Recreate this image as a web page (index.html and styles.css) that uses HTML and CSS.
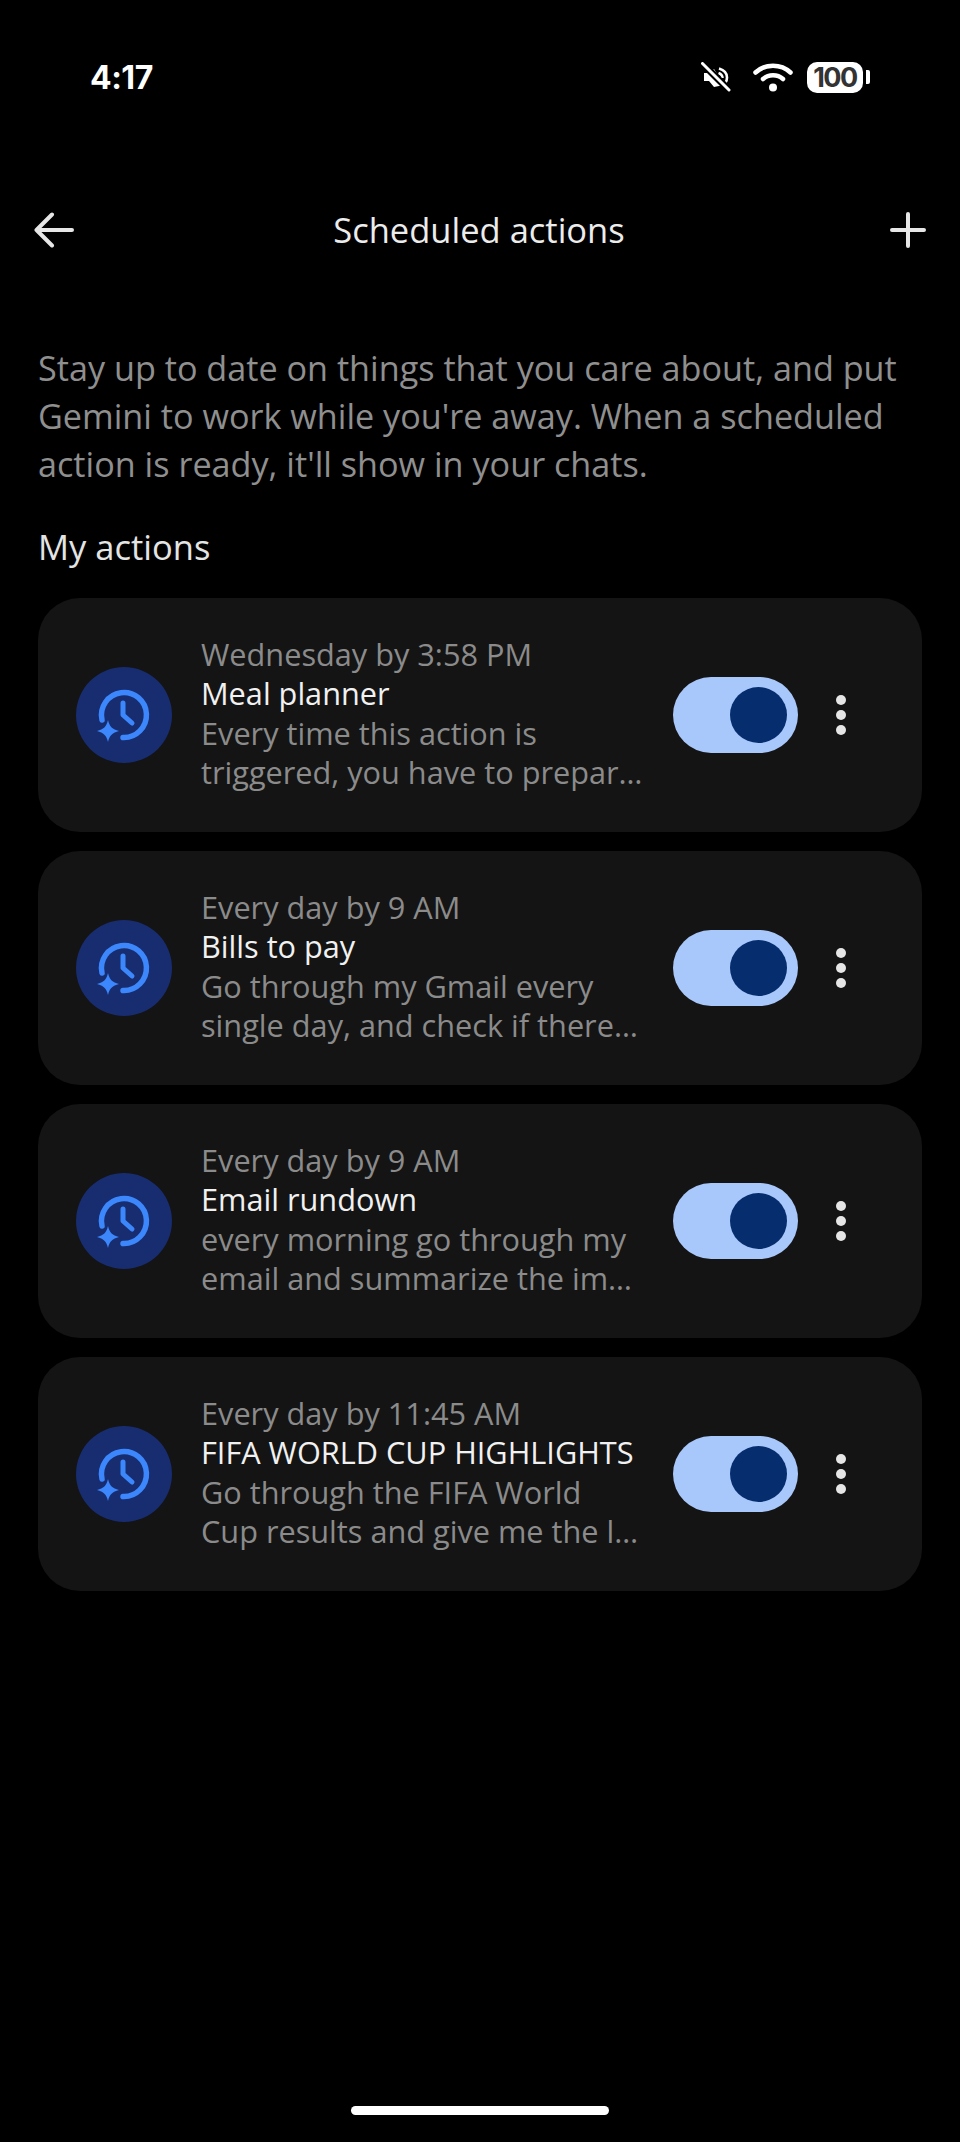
FILE: index.html
```html
<!DOCTYPE html>
<html lang="en">
<head>
<meta charset="utf-8">
<title>Scheduled actions</title>
<link rel="stylesheet" href="styles.css">
</head>
<body>
<svg class="defs" width="0" height="0" aria-hidden="true">
  <symbol id="sched" viewBox="0 0 96 96">
    <path d="M26 53A22.5 22.5 0 1 1 47 70.5" fill="none" stroke="currentColor" stroke-width="5.500" stroke-linecap="round"/>
    <path d="M47 36V48L56 56" fill="none" stroke="currentColor" stroke-width="5" stroke-linecap="round" stroke-linejoin="round"/>
    <path d="M32 53C33.500 59.500 36.500 62.500 43 64C36.500 65.500 33.500 68.500 32 75C30.500 68.500 27.500 65.500 21 64C27.500 62.500 30.500 59.500 32 53Z" fill="currentColor"/>
  </symbol>
</svg>
<main class="screen">
  <div class="status">
    <span class="time">4:17</span>
    <div class="status-icons">
      <svg class="ic-mute" width="30" height="30" viewBox="0 0 30 30">
        <path d="M3 11H8L13 7L23 23L13 25L8 19H3Z" fill="#fff"/>
        <path d="M18 6.500C23 8 26 11.500 26 15.500C26 17.500 25.500 19 24.500 20.500M17.500 11C20 12 21.500 13.500 21.500 16" fill="none" stroke="#fff" stroke-width="2.600"/>
        <path d="M1.500 1.500L28 28" stroke="#000" stroke-width="7"/>
        <path d="M1.500 1.500L28 28" stroke="#fff" stroke-width="3" stroke-linecap="round"/>
      </svg>
      <svg class="ic-wifi" width="40" height="30" viewBox="0 0 40 30">
        <path d="M2.500 10.500C12 1.500 28 1.500 37.500 10.500" fill="none" stroke="#fff" stroke-width="4.500" stroke-linecap="round"/>
        <path d="M10 17C15.500 12 24.500 12 30 17" fill="none" stroke="#fff" stroke-width="4.500" stroke-linecap="round"/>
        <circle cx="20" cy="25.500" r="4" fill="#fff"/>
      </svg>
      <div class="battery"><span class="batt-level">100</span><span class="batt-cap"></span></div>
    </div>
  </div>

  <header class="appbar">
    <svg width="40" height="40" viewBox="0 0 40 40"><path d="M38 20H2.500M18 4.500L2.500 20L18 35.500" fill="none" stroke="#e6e6e6" stroke-width="4" stroke-linecap="round" stroke-linejoin="round"/></svg>
    <h1 class="title">Scheduled actions</h1>
    <svg width="36" height="36" viewBox="0 0 36 36"><path d="M18 2V34M2 18H34" fill="none" stroke="#e6e6e6" stroke-width="4" stroke-linecap="round"/></svg>
  </header>

  <p class="intro">Stay up to date on things that you care about, and put Gemini to work while you're away. When a scheduled action is ready, it'll show in your chats.</p>
  <h2 class="section">My actions</h2>

  <section class="cards">
    <article class="card">
      <div class="badge"><svg class="badge-icon"><use href="#sched"/></svg></div>
      <div class="info">
        <div class="when">Wednesday by 3:58 PM</div>
        <div class="name">Meal planner</div>
        <div class="desc">Every time this action is<br>triggered, you have to prepar…</div>
      </div>
      <div class="switch"><span class="knob"></span></div>
      <div class="more"><i></i><i></i><i></i></div>
    </article>
    <article class="card">
      <div class="badge"><svg class="badge-icon"><use href="#sched"/></svg></div>
      <div class="info">
        <div class="when">Every day by 9 AM</div>
        <div class="name">Bills to pay</div>
        <div class="desc">Go through my Gmail every<br>single day, and check if there…</div>
      </div>
      <div class="switch"><span class="knob"></span></div>
      <div class="more"><i></i><i></i><i></i></div>
    </article>
    <article class="card">
      <div class="badge"><svg class="badge-icon"><use href="#sched"/></svg></div>
      <div class="info">
        <div class="when">Every day by 9 AM</div>
        <div class="name">Email rundown</div>
        <div class="desc">every morning go through my<br>email and summarize the im…</div>
      </div>
      <div class="switch"><span class="knob"></span></div>
      <div class="more"><i></i><i></i><i></i></div>
    </article>
    <article class="card">
      <div class="badge"><svg class="badge-icon"><use href="#sched"/></svg></div>
      <div class="info">
        <div class="when">Every day by 11:45 AM</div>
        <div class="name">FIFA WORLD CUP HIGHLIGHTS</div>
        <div class="desc">Go through the FIFA World<br>Cup results and give me the l…</div>
      </div>
      <div class="switch"><span class="knob"></span></div>
      <div class="more"><i></i><i></i><i></i></div>
    </article>
  </section>

  <div class="home-bar"></div>
</main>
</body>
</html>
```
FILE: styles.css
```css
* { box-sizing: border-box; }
html, body { margin: 0; background: #000; }
.defs { position: absolute; }
.screen {
  width: 960px;
  height: 2142px;
  display: flex;
  flex-direction: column;
  background: #000;
  color: #eee;
  font-family: "Open Sans", Roboto, sans-serif;
}
.status {
  height: 60px;
  margin-top: 47px;
  padding: 0 90px;
  display: flex;
  align-items: center;
  justify-content: space-between;
}
.time { font-size: 32px; font-weight: 700; color: #fff; font-family: Inter, sans-serif; letter-spacing: -0.5px; }
.status-icons { display: flex; align-items: center; gap: 14px; }
.ic-wifi { margin-left: 8px; }
.battery { display: flex; align-items: center; gap: 3px; }
.batt-level {
  width: 56px;
  height: 31px;
  background: #fff;
  border-radius: 10px;
  color: #333;
  font: 700 27px/31px Inter, sans-serif;
  letter-spacing: -1.5px;
  text-align: center;
}
.batt-cap { width: 4px; height: 14px; background: #fff; border-radius: 0 2px 2px 0; }
.appbar {
  height: 60px;
  margin-top: 93px;
  padding: 0 34px;
  display: flex;
  align-items: center;
  justify-content: space-between;
}
.title { margin: -2px 0 0 -6px; font-size: 34.500px; font-weight: 400; color: #ececec; }
.intro {
  margin: 84px 0 0;
  padding: 0 38px;
  font-size: 34.200px;
  line-height: 48px;
  color: #8f8f8f;
}
.section {
  margin: 35px 0 0;
  padding: 0 38px;
  font-size: 34.500px;
  line-height: 48px;
  font-weight: 400;
  color: #e4e4e4;
}
.cards {
  margin-top: 27px;
  padding: 0 38px;
  display: flex;
  flex-direction: column;
  gap: 19px;
}
.card {
  height: 234px;
  padding: 0 38px;
  display: flex;
  align-items: center;
  background: #141414;
  border-radius: 42px;
}
.badge {
  flex: none;
  width: 96px;
  height: 96px;
  border-radius: 50%;
  background: #182c70;
  color: #3b87fb;
}
.badge-icon { display: block; width: 96px; height: 96px; }
.info { flex: none; width: 472px; margin-left: 29px; padding-bottom: 3px; font-size: 30.700px; line-height: 39.300px; }
.when, .desc { color: #8b8b8b; white-space: nowrap; }
.name { color: #f1f1f1; white-space: nowrap; }
.switch {
  flex: none;
  width: 125px;
  height: 76px;
  padding: 10px 11px;
  display: flex;
  justify-content: flex-end;
  border-radius: 38px;
  background: #a8c7fa;
}
.knob { width: 57px; height: 56px; border-radius: 50%; background: #062e6f; }
.more {
  flex: none;
  width: 10px;
  margin-left: 38px;
  display: flex;
  flex-direction: column;
  gap: 5px;
}
.more i { display: block; width: 10px; height: 10px; border-radius: 50%; background: #e6e6e6; }
.home-bar {
  width: 258px;
  height: 9px;
  margin: auto auto 27px;
  border-radius: 5px;
  background: #fff;
}
```
